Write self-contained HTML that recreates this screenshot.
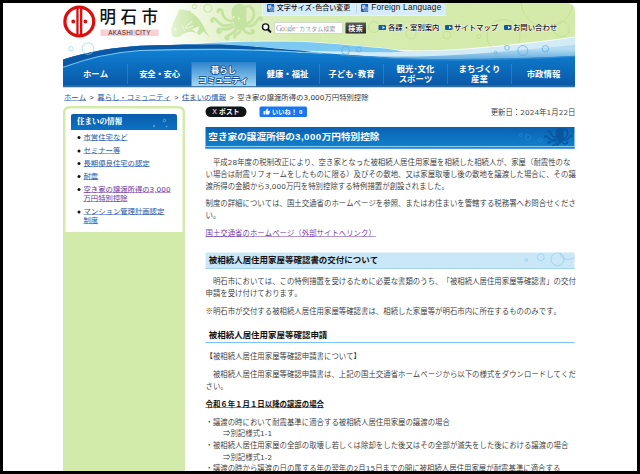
<!DOCTYPE html>
<html lang="ja">
<head>
<meta charset="utf-8">
<title>空き家の譲渡所得の3,000万円特別控除 - 明石市</title>
<style>
html,body{margin:0;padding:0;background:#000;overflow:hidden;}
body{width:640px;height:474px;position:relative;}
#w{position:absolute;left:0;top:0;width:1280px;height:948px;box-sizing:border-box;border:6px solid #000;background:#fff;transform:scale(.5);transform-origin:0 0;overflow:hidden;
 font-family:"Liberation Sans","Noto Sans CJK JP",sans-serif;color:#333;font-size:14.5px;line-height:24px;}
#w *{box-sizing:border-box;}
#w{text-spacing-trim:space-all;font-kerning:none;}
.abs{position:absolute;}
a{color:#2456a6;text-decoration:underline;}
a.v{color:#6c2fa0;}
/* everything inside #p uses coordinates = target px * 2 (origin at image 0,0) */
#p{position:absolute;left:-6px;top:-6px;width:1280px;height:948px;}
.nw{white-space:nowrap;}
b{font-weight:inherit;font-family:"DejaVu Sans","Liberation Sans",sans-serif;line-height:0;}
i{font-style:normal;display:inline-block;width:22.5px;text-align:center;}

/* header */
#logoT{left:199px;top:12px;font-size:33px;line-height:44px;letter-spacing:9px;color:#111;font-weight:500;}
#logoE{left:201px;top:58px;width:116px;height:14px;background:#fbd0d3;color:#3a2c2e;font-size:12.6px;line-height:13.5px;text-align:center;font-weight:normal;letter-spacing:.6px;height:13px;top:59px;}
#tool{left:523.5px;top:6px;width:368.5px;height:26px;background:#d6ecf8;border-radius:0 0 0 5px;border-left:1.5px solid #f2f9fd;border-bottom:1.5px solid #f2f9fd;font-size:14px;line-height:26px;color:#111;font-weight:500;}
#nav .it{position:absolute;top:124px;height:48px;width:128px;color:#fff;font-weight:bold;font-size:16.8px;text-align:center;line-height:19.5px;display:flex;align-items:center;justify-content:center;}
#nav .sep{position:absolute;top:128px;height:40px;width:1px;background:#4f8fcb;}
.hl{text-shadow:0 0 2px #fff,0 0 2px #fff,0 0 3px #fff,0 0 4px #fff;position:absolute;font-size:14.7px;line-height:16px;color:#111;white-space:nowrap;font-weight:500;}
.hi{position:absolute;width:15px;height:10px;background:#1558b0;border-radius:2px;margin-top:-1px;}
.hi:after{content:"";position:absolute;left:7.5px;top:2px;border-left:5px solid #fff;border-top:3px solid transparent;border-bottom:3px solid transparent;}

/* sidebar */
#side{left:126px;top:212px;width:244px;height:760px;background:#d2eaaa;border-radius:12px;}
#sideIn{left:131px;top:217px;width:234px;height:247px;background:#fff;border-radius:8px 8px 0 0;}
#sideH{left:142px;top:228px;width:212px;height:32px;background:linear-gradient(#0a5cac,#0b72c2);border-radius:4px 4px 0 0;color:#fff;font-family:"Liberation Serif","Noto Serif CJK SC",serif;font-weight:900;font-size:15px;line-height:30px;padding-left:12px;}
#side ul{margin:0;padding:0;list-style:none;}
.sl{position:absolute;left:167px;width:200px;font-size:14.7px;line-height:18px;}
.sl:before{content:"";position:absolute;left:-12.5px;top:6.5px;width:6px;height:6px;border-radius:50%;background:#111;}

/* main */
.t{position:absolute;left:411px;white-space:nowrap;font-size:14.82px;font-weight:350;color:#2b2b2b;line-height:24px;color:#333;}
#h1{left:411px;top:254px;width:738px;height:43px;background:linear-gradient(#0a61b2,#1084ce);color:#fff;font-weight:bold;font-size:19.3px;line-height:40px;padding-left:5.5px;white-space:nowrap;overflow:hidden;}
#h2{left:411px;top:505px;width:738px;height:33px;background:#c9e7f6;border-bottom:2px solid #9fd3ee;color:#111;font-weight:bold;font-size:16.95px;line-height:30px;padding-left:6.5px;white-space:nowrap;overflow:hidden;}
#h3{left:411px;top:654px;width:738px;height:32px;border-bottom:2px solid #7cc5ee;color:#111;font-weight:bold;font-size:16.95px;line-height:32px;padding-left:6.5px;white-space:nowrap;}
#h1 b{font-family:"Liberation Sans",sans-serif;letter-spacing:1px;}
.t b{font-weight:400;color:#484848;}
.t{margin-top:2px;}
</style>
</head>
<body>
<div id="w"><div id="p">

<!-- header background -->
<svg class="abs" style="left:126px;top:6px" width="1024" height="168" viewBox="63 3 512 84">
 <defs>
  <linearGradient id="gg" x1="0" x2="1" y1="0" y2="0">
   <stop offset="0" stop-color="#fff"/><stop offset=".2" stop-color="#fff"/><stop offset=".3" stop-color="#e6f3d0"/><stop offset=".46" stop-color="#d7ecb2"/><stop offset="1" stop-color="#d3eaa8"/>
  </linearGradient>
  <linearGradient id="ng" x1="0" x2="0" y1="46" y2="86.300" gradientUnits="userSpaceOnUse">
   <stop offset="0" stop-color="#1286d8"/><stop offset=".35" stop-color="#0d74c6"/><stop offset=".96" stop-color="#0a5aa8"/><stop offset="1" stop-color="#2a78c0"/>
  </linearGradient>
  <linearGradient id="sel" x1="0" x2="0" y1="0" y2="1">
   <stop offset="0" stop-color="#2d84cc"/><stop offset="1" stop-color="#a6d8f4"/>
  </linearGradient>
  <linearGradient id="fg" x1="171" x2="210" y1="0" y2="0" gradientUnits="userSpaceOnUse"><stop offset="0" stop-color="#e4f3d2"/><stop offset=".6" stop-color="#c9e5a6"/><stop offset="1" stop-color="#c4e29e"/></linearGradient>
  <linearGradient id="lb" x1="0" x2="0" y1="49" y2="60" gradientUnits="userSpaceOnUse"><stop offset="0" stop-color="#b2dcf4"/><stop offset="1" stop-color="#5ea9dd"/></linearGradient>
  <clipPath id="hc"><path d="M63 3H567a8 8 0 0 1 8 8V87H63Z"/></clipPath>
 </defs>
 <g clip-path="url(#hc)">
  <rect x="63" y="3" width="512" height="60" fill="url(#gg)"/>
  <!-- green decorations -->
  <g fill="none" stroke="#bddb8e" stroke-width=".7">
   <circle cx="503.500" cy="36" r="16.500"/><circle cx="547" cy="1" r="26"/><circle cx="561.600" cy="29" r="7.800"/><circle cx="479" cy="36.500" r="2"/>
   <circle cx="374" cy="27" r="5.500"/><circle cx="411" cy="34" r="5"/><circle cx="447" cy="35" r="4"/>
  </g>
  <g fill="none" stroke="#c8e4a4" stroke-width="1">
   <circle cx="194.400" cy="6.600" r="2.200"/><circle cx="207.900" cy="8.300" r="4"/>
  </g>
  <!-- fish -->
  <path fill="url(#fg)" d="M172.500 35.500C170.800 33 170.800 30 172 27C173.500 22.500 175.500 17.500 178 12.500L178.600 9L180 11L181 8.600L182.300 10.600L183.600 8.800L185 10.800L186.500 9.400L187.800 11.300L189.500 10.200L191 12C195 14.500 199 18.500 201.500 22.500C203.500 26 205 29 206.500 32L209.800 37.600L204.800 32.800C204 32 203.300 31.300 203 30.800C202.500 32.500 201 34.300 199 35C197.500 33.300 194 32 190.500 31.800C186.500 31.800 183.500 34 180.500 36C178 37.600 174.500 38 172.500 35.500Z"/>
  <g fill="none" stroke="#f0f8e2" stroke-width="1" stroke-linecap="round">
   <path d="M181.500 25.500c1.500 1.500 2.500 3 3 5M185.500 27l6.500-5.500M186 28.500l7-2.500"/>
  </g>
  <circle cx="175" cy="29.400" r="1.400" fill="#f0f8e2"/>
  <path d="M191.500 29.300l8-3l-2.600 7.200c-1.500-2-3.300-3.400-5.400-4.200z" fill="#f0f8e2"/>
  <!-- octopus -->
  <g fill="none" stroke="#c5e3a0" stroke-linecap="round" stroke-linejoin="round">
   <path stroke-width="2.800" d="M233 20.500c-4 1-8-1-10-5.500c-1-2.500-.5-5-2.500-5.500c-1.800-.4-3 1-2.500 2.300"/>
   <path stroke-width="2.800" d="M232 24.500c-5 2-10 1.500-13.500-2c-2-2-3.500-4.500-5.500-4c-1.600.4-2 2.300-.6 3"/>
   <path stroke-width="2.800" d="M233 27c-4 3-9 2.500-12.500 2c-2.500-.3-3.500 1.800-2.500 3.200c.8 1 2.300.8 2.600-.3"/>
   <path stroke-width="2.800" d="M237 28.500c-2 4-5 5-7.500 6.500c-2 1.200-4 1.500-3.800 3c.2 1.300 2 1.400 2.500.2"/>
   <path stroke-width="2.600" d="M240.500 29.500c-.5 3-3 4.500-5 5.500c-1.300.7-1.600 2-.6 2.600"/>
   <path stroke-width="2.600" d="M243.500 29c1 3 4 4.500 7 4.500c2 0 3.500-1 3.300-2.400c-.2-1.200-1.600-1.400-2.200-.6"/>
   <path stroke-width="2.800" d="M246 25c3 2 7 1 9.500-2c2-2.500 3-5.500 5-5.500c1.500 0 1.800 1.800.6 2.300"/>
   <path stroke-width="2.800" d="M245 7c3-1.500 6.500-.5 8 2.500c1.500 3.500.8 8-1.500 11c-1.500 2-3.500 3-5.500 3.500"/>
  </g>
  <path d="M231.500 13.500c-.5-5.500 3-9.600 7.800-9.700c4.600-.1 7.700 3.600 7.200 8.700c-.3 3.500-.4 6.500.3 10c.7 3.500-.8 7.300-5.300 7.500c-4.700.2-7.200-2.300-7.600-6c-.4-3.700-2.100-6.500-2.400-10.500z" fill="#c5e3a0"/>
  <circle cx="233.600" cy="17" r=".9" fill="#eef7de"/><circle cx="239" cy="18.400" r=".9" fill="#eef7de"/>

  <!-- waves -->
  <path d="M63 87V59C90 51 115 47 140 45.400C165 44.200 190 43.500 205 42.600C235 41 265 40.300 300 41.200C330 42.500 355 45.500 380 47.500C395 49.500 405 50.500 415 50.400C435 50.300 450 49.800 470 48.200C510 45 545 41 575 36.500V87Z" fill="#fff"/>
  <!-- whitish band on the right -->
  <path d="M300 50C330 51 360 52 380 52.200C395 51.500 405 50.800 415 50.900C435 51 450 50.300 470 49C510 46 545 42 575 37.300V60H300Z" fill="#d3ebf7"/>
  <!-- light blue band middle -->
  <path d="M196 43.400C235 41.800 265 41 300 41.800C330 43 355 46 380 48C390 49 398 50.500 405 51.500C395 52.200 388 52.300 380 52.300C350 52 325 51 300 50.400C270 48 245 45.500 220 44.500Z" fill="#7ec9f1"/>
  <!-- medium-light blue band right -->
  <path d="M300 52.900C330 54 355 55.600 380 56.300C410 56.900 440 56 460 54.700C500 52 540 48.600 575 44.800V62H300Z" fill="url(#lb)"/>
  <!-- nav dark body -->
  <path d="M63 87V59.400C90 51.400 115 47.300 140 45.800C165 44.800 195 44 220 44.600C245 45.600 270 48 300 52.800C330 53 355 55.500 380 57.200C410 59.300 440 59.800 470 59.200C510 58.700 545 57.600 575 56V87Z" fill="url(#ng)"/>
  <path d="M340 55.300C355 56 368 57 380 57.600C410 59.500 440 60 470 59.500C510 59 545 58 575 56.400" fill="none" stroke="#2f8ad0" stroke-width="1.400"/>
  <!-- dark band at top-left of nav -->
  <path d="M63 59.400C90 51.400 115 47.300 140 45.800C165 44.800 195 44 220 44.600C245 45.600 270 48 300 50.500L320 53C290 51.800 255 49.600 220 49.300C190 49.300 165 49.700 140 50.600C112 52.500 88 58 63 67.400Z" fill="#0a58a5"/>
  <path d="M63 67.300C88 58 112 52.500 140 50.500C165 49.600 190 49.200 220 49.300C255 49.600 290 51.800 322 53.200" fill="none" stroke="#7cc6f2" stroke-width="1.200"/>
  <!-- selected -->
  <rect x="191.500" y="62" width="64.500" height="24.200" fill="url(#sel)"/>
  <!-- bubbles -->
  <g fill="none" stroke="#58a9e0" stroke-width=".7">
   <circle cx="345.600" cy="50.400" r="4"/><circle cx="358.800" cy="49.600" r="2.400"/>
   <circle cx="507" cy="47.800" r="2.400"/><circle cx="495.600" cy="52.500" r="1.400"/><circle cx="522.800" cy="50.600" r="5"/><circle cx="545.400" cy="48.800" r="3.200"/>
  </g>
 </g>
 <g fill="none" stroke="#8fd3ef" stroke-width=".7">
  <circle cx="71" cy="48.800" r="2.200"/><circle cx="88" cy="48.600" r="5.800"/>
 </g>
</svg>

<!-- logo -->
<svg class="abs" style="left:126px;top:10px" width="66" height="66" viewBox="0 0 66 66">
 <circle cx="32.600" cy="33" r="28.800" fill="none" stroke="#d8100f" stroke-width="6.600"/>
 <rect x="26.600" y="4" width="4.600" height="58" fill="#d8100f"/><rect x="34" y="4" width="4.600" height="58" fill="#d8100f"/>
 <circle cx="20.500" cy="33" r="3.800" fill="#d8100f"/><circle cx="44.700" cy="33" r="3.800" fill="#d8100f"/>
</svg>
<div id="logoT" class="abs nw">明石市</div>
<div id="logoE" class="abs nw">AKASHI CITY</div>

<!-- tool bar -->
<div id="tool" class="abs nw">
 <span class="abs" style="left:29px;top:-5px">文字サイズ･色合い変更</span>
 <span class="abs" style="left:188px;top:3px;width:1px;height:17px;background:#9bb8cc"></span>
 <span class="abs" style="left:218px;top:-5px;font-size:16.5px;letter-spacing:.4px">Foreign Language</span>
</div>
<svg class="abs" style="left:534px;top:7.500px" width="15" height="17" viewBox="0 0 15 17"><rect x="0" y="0" width="14.600" height="16" rx="1.500" fill="#1c5cb0"/><path d="M2.500 2.500h6v7h-6z" fill="#fff" opacity=".9"/><path d="M6 6.500h6.500v7.500H6z" fill="#1c5cb0" stroke="#fff" stroke-width="1"/><path d="M4 4.500h3M4 6.500h1.500M8 9h3M8 11.500h3" stroke="#1c5cb0" stroke-width=".9"/><path d="M8 9.300h3M8 11.500h3" stroke="#fff" stroke-width=".9"/></svg>
<svg class="abs" style="left:721.500px;top:7.500px" width="15" height="17" viewBox="0 0 15 17"><rect x="0" y="0" width="14.600" height="16" rx="1.500" fill="#1c5cb0"/><path d="M2.500 2.500h6v7h-6z" fill="#fff" opacity=".9"/><path d="M6 6.500h6.500v7.500H6z" fill="#1c5cb0" stroke="#fff" stroke-width="1"/><path d="M4 4.500h3M4 6.500h1.500M8 9h3M8 11.500h3" stroke="#1c5cb0" stroke-width=".9"/><path d="M8 9.300h3M8 11.500h3" stroke="#fff" stroke-width=".9"/></svg>

<!-- search -->
<svg class="abs" style="left:522px;top:44px" width="24" height="24" viewBox="0 0 24 24"><circle cx="9.200" cy="10" r="6.200" fill="#fff" stroke="#111" stroke-width="2.700"/><path d="M14.500 15.500L18.600 19.600" stroke="#111" stroke-width="4.200" stroke-linecap="round"/></svg>
<div class="abs nw" style="left:549px;top:45px;width:136px;height:22px;background:#fff;border:1px solid #b9b9b9;font-size:12px;line-height:20px;color:#9a9a9a;padding-left:2px;"><span style="font-family:'Liberation Serif',serif;font-size:15.5px;letter-spacing:-1.4px;opacity:.8"><span style="color:#5a86d6">G</span><span style="color:#d66">o</span><span style="color:#e0b84a">o</span><span style="color:#5a86d6">g</span><span style="color:#6ab46a">l</span><span style="color:#d66">e</span></span><span style="font-size:6px;vertical-align:top">™</span> カスタム検索</div>
<div class="abs nw" style="left:691px;top:45px;width:41px;height:22px;background:linear-gradient(#5c5c5c,#262626);color:#f4f4f4;font-weight:bold;font-size:14px;line-height:22px;text-align:center;letter-spacing:1px;border-radius:1px">検索</div>

<span class="hi" style="left:757px;top:51px"></span><div class="hl" style="left:776px;top:47px">各課・室別案内</div>
<span class="hi" style="left:890px;top:51px"></span><div class="hl" style="left:908px;top:47px">サイトマップ</div>
<span class="hi" style="left:1008px;top:51px"></span><div class="hl" style="left:1026px;top:47px">お問い合わせ</div>

<!-- nav -->
<div id="nav">
 <div class="it" style="left:127px">ホーム</div>
 <div class="it" style="left:255px;letter-spacing:-.6px">安全・安心</div>
 <div class="it" style="left:383px;color:#fff;-webkit-text-stroke:3px #0b4c96;paint-order:stroke fill;font-size:16.6px;line-height:19.500px;top:126px">暮らし<br>コミュニティ</div>
 <div class="it" style="left:511px">健康・福祉</div>
 <div class="it" style="left:639px">子ども･教育</div>
 <div class="it" style="left:767px">観光･文化<br>スポーツ</div>
 <div class="it" style="left:895px">まちづくり<br>産業</div>
 <div class="it" style="left:1023px">市政情報</div>
 <div class="sep" style="left:255px"></div>
 <div class="sep" style="left:639px"></div>
 <div class="sep" style="left:767px"></div>
 <div class="sep" style="left:895px"></div>
 <div class="sep" style="left:1022px"></div>
</div>

<div class="abs" style="left:126px;top:172.500px;width:1024px;height:4px;background:linear-gradient(rgba(60,70,90,.45),rgba(120,130,150,0))"></div>
<!-- breadcrumb -->
<div class="abs nw" style="left:128px;top:182px;font-size:14.7px;line-height:24px;color:#333"><a>ホーム</a><i>&gt;</i><a>暮らし・コミュニティ</a><i>&gt;</i><a>住まいの情報</a><i>&gt;</i>空き家の譲渡所得の<b>3,000</b>万円特別控除</div>

<!-- sidebar -->
<div id="side" class="abs"></div>
<div id="sideIn" class="abs"></div>
<div id="sideH" class="abs nw">住まいの情報</div>
<svg class="abs" style="left:300px;top:232px" width="50" height="26" viewBox="0 0 50 26"><g fill="none" stroke="#9fd0f0" stroke-width="1"><circle cx="29" cy="9" r="2.500"/><circle cx="8" cy="20" r="1.500"/><circle cx="33" cy="21" r="1"/></g></svg>
<div class="sl" style="top:265px"><a>市営住宅など</a></div>
<div class="sl" style="top:292px"><a>セミナー等</a></div>
<div class="sl" style="top:317px"><a>長期優良住宅の認定</a></div>
<div class="sl" style="top:343px"><a>耐震</a></div>
<div class="sl" style="top:369px"><a class="v">空き家の譲渡所得の<b>3,000</b><br>万円特別控除</a></div>
<div class="sl" style="top:414px"><a>マンション管理計画認定<br>制度</a></div>

<!-- social -->
<div class="abs nw" style="left:411px;top:213px;width:82px;height:21px;border-radius:11px;background:#0f1419;color:#fff;font-size:13.5px;font-weight:bold;line-height:21px;text-align:center;letter-spacing:.3px"><span style="font-weight:normal;font-size:14px">X</span> ポスト</div>
<div class="abs nw" style="left:519px;top:213px;width:95px;height:21px;border-radius:3px;background:#1877f2;color:#fff;font-size:12.3px;font-weight:bold;line-height:21px;padding-left:25px;letter-spacing:.3px">いいね！ 0</div>
<svg class="abs" style="left:526px;top:216px" width="14" height="14" viewBox="0 0 14 14"><path d="M1 6h3v7H1zM5 6l3-5c1.500 0 2 1 1.600 2.500L9 5.500h3.500c1 0 1.500.8 1.200 1.800l-1.200 4.500c-.2.800-.8 1.200-1.600 1.200H5z" fill="#fff"/></svg>
<div class="t" style="left:auto;right:129px;top:210px">更新日：<b>2024</b>年<b>1</b>月<b>22</b>日</div>

<!-- main -->
<div id="h1" class="abs">空き家の譲渡所得の<b>3,000</b>万円特別控除</div>
<svg class="abs" style="left:1020px;top:252px" width="132" height="48" viewBox="510 126 66 24">
 <g fill="none" stroke="#3187d0" stroke-width=".7"><circle cx="520.700" cy="135.300" r="1.500"/><circle cx="528" cy="137.300" r="2.800"/><circle cx="540" cy="140.400" r="1.800"/></g>
 <g transform="translate(430.560 125.770) scale(.54)" opacity=".8">
  <g fill="none" stroke="#0a509a" stroke-linecap="round" stroke-linejoin="round">
   <path stroke-width="2.800" d="M233 20.500c-4 1-8-1-10-5.500c-1-2.500-.5-5-2.500-5.500c-1.800-.4-3 1-2.500 2.300"/>
   <path stroke-width="2.800" d="M232 24.500c-5 2-10 1.500-13.500-2c-2-2-3.500-4.500-5.500-4c-1.600.4-2 2.300-.6 3"/>
   <path stroke-width="2.800" d="M233 27c-4 3-9 2.500-12.500 2c-2.500-.3-3.500 1.800-2.500 3.200c.8 1 2.300.8 2.600-.3"/>
   <path stroke-width="2.800" d="M237 28.500c-2 4-5 5-7.500 6.500c-2 1.200-4 1.500-3.800 3c.2 1.300 2 1.400 2.500.2"/>
   <path stroke-width="2.600" d="M240.500 29.500c-.5 3-3 4.500-5 5.500c-1.300.7-1.600 2-.6 2.600"/>
   <path stroke-width="2.600" d="M243.500 29c1 3 4 4.500 7 4.500c2 0 3.500-1 3.300-2.400c-.2-1.200-1.600-1.400-2.200-.6"/>
   <path stroke-width="2.800" d="M246 25c3 2 7 1 9.500-2c2-2.500 3-5.500 5-5.500c1.500 0 1.800 1.800.6 2.300"/>
   <path stroke-width="2.800" d="M245 7c3-1.500 6.500-.5 8 2.500c1.500 3.500.8 8-1.500 11c-1.500 2-3.500 3-5.500 3.500"/>
  </g>
  <path d="M231.500 13.500c-.5-5.500 3-9.600 7.800-9.700c4.600-.1 7.700 3.600 7.200 8.700c-.3 3.500-.4 6.500.3 10c.7 3.500-.8 7.300-5.300 7.500c-4.700.2-7.200-2.300-7.600-6c-.4-3.700-2.100-6.500-2.400-10.500z" fill="#0a509a"/>
 </g>
</svg>
<div class="abs" style="left:411px;top:292px;width:738px;height:2px;background:#8ccdf0"></div>
<div class="abs" style="left:411px;top:294px;width:738px;height:3px;background:#1686d6"></div>

<div class="t" style="top:310px">　平成<b>28</b>年度の税制改正により、空き家となった被相続人居住用家屋を相続した相続人が、家屋（耐震性のな<br>い場合は耐震リフォームをしたものに限る）及びその敷地、又は家屋取壊し後の敷地を譲渡した場合に、その譲<br>渡所得の金額から<b>3,000</b>万円を特別控除する特例措置が創設されました。</div>
<div class="t" style="top:393px">制度の詳細については、国土交通省のホームページを参照、またはお住まいを管轄する税務署へお問合せくださ<br>い。</div>
<div class="t" style="top:453px"><a class="v">国土交通省のホームページ（外部サイトへリンク）</a></div>

<div id="h2" class="abs">被相続人居住用家屋等確認書の交付について</div>
<svg class="abs" style="left:1040px;top:505px" width="110" height="33" viewBox="0 0 110 33"><g fill="none" stroke="#8ccbee" stroke-width="1.300"><circle cx="12.500" cy="15" r="2.800"/><circle cx="41.500" cy="9.500" r="7"/><circle cx="75" cy="13.500" r="13"/><path d="M80 1c3 13 16 16 30 9"/></g></svg>

<div class="t" style="top:549px">　明石市においては、この特例措置を受けるために必要な書類のうち、「被相続人居住用家屋等確認書」の交付<br>申請を受け付けております。</div>
<div class="t" style="top:608px">※明石市が交付する被相続人居住用家屋等確認書は、相続した家屋等が明石市内に所在するもののみです。</div>

<div id="h3" class="abs">被相続人居住用家屋等確認申請</div>

<div class="t" style="top:699px">【被相続人居住用家屋等確認申請書について】</div>
<div class="t" style="top:735px">　被相続人居住用家屋等確認申請書は、上記の国土交通省ホームページから以下の様式をダウンロードしてくだ<br>さい。</div>
<div class="t" style="top:794px;font-weight:bold;color:#111;text-decoration:underline">令和６年１月１日以降の譲渡の場合</div>
<div class="t" style="top:831px;line-height:23.300px">・譲渡の時において耐震基準に適合する被相続人居住用家屋の譲渡の場合<br>　　<span style="display:inline-block;width:5.5px"></span>⇒別記様式<b>1-1</b><br>・被相続人居住用家屋の全部の取壊し若しくは除却をした後又はその全部が滅失をした後における譲渡の場合<br>　　<span style="display:inline-block;width:5.5px"></span>⇒別記様式<b>1-2</b><br>・譲渡の時から譲渡の日の属する年の翌年の<b>2</b>月<b>15</b>日までの間に被相続人居住用家屋が耐震基準に適合する</div>

</div></div>
</body>
</html>
